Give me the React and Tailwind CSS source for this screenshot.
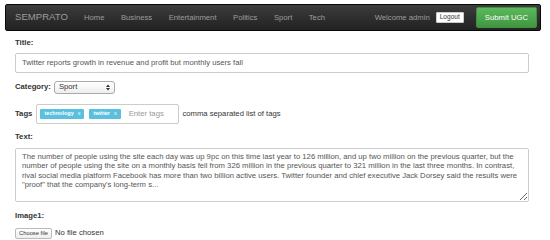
import { useState } from "react";

const links = ["Home", "Business", "Entertainment", "Politics", "Sport", "Tech"];

const body =
  "The number of people using the site each day was up 9pc on this time last year to 126 million, and up two million on the previous quarter, but the number of people using the site on a monthly basis fell from 326 million in the previous quarter to 321 million in the last three months. In contrast, rival social media platform Facebook has more than two billion active users. Twitter founder and chief executive Jack Dorsey said the results were \"proof\" that the company's long-term s...";

const Tag = ({ label }) => (
  <span className="flex items-center gap-[4px] h-[10px] px-[4px] rounded-[1px] bg-[#5bc0de] text-white text-[5.5px] font-bold leading-none">
    {label}
    <span className="font-normal">x</span>
  </span>
);

const App = () => {
  const [title, setTitle] = useState(
    "Twitter reports growth in revenue and profit but monthly users fall"
  );
  const [text, setText] = useState(body);

  return (
    <div className="w-[550px] h-[240px] overflow-hidden bg-white text-[#333] text-[7.7px] font-['Liberation_Sans',Arial,sans-serif]">
      {/* Navbar */}
      <div className="mt-[4px] ml-[5px] mr-[9px] h-[27px] flex items-center rounded-[2px] bg-gradient-to-b from-[#3c3c3c] to-[#222] border border-[#080808]">
        <span className="ml-[9px] mr-[16px] text-[9.6px] text-[#9d9d9d]">SEMPRATO</span>
        <div className="flex gap-[16.5px] text-[#9d9d9d]">
          {links.map((l) => (
            <span key={l}>{l}</span>
          ))}
        </div>
        <div className="ml-auto flex items-center">
          <span className="text-[#9d9d9d]">Welcome admin</span>
          <button className="ml-[6px] h-[11px] px-[3px] bg-white border border-[#ccc] rounded-[1px] text-[6.6px] leading-none text-[#333]">
            Logout
          </button>
          <button className="ml-[12px] mr-[3px] h-[21px] px-[8px] rounded-[2px] bg-gradient-to-b from-[#5cb85c] to-[#419641] border border-[#3e8f3e] text-white text-[7.7px] leading-none">
            Submit UGC
          </button>
        </div>
      </div>

      <div className="pl-[15px] pr-[21px]">
        <label className="block mt-[5.5px] h-[11px] leading-[11px] font-bold">Title:</label>
        <input
          className="mt-[5px] block w-full h-[20px] px-[6px] border border-[#ccc] rounded-[2px] text-[7.7px] text-[#555] outline-none"
          value={title}
          onChange={(e) => setTitle(e.target.value)}
        />

        <div className="mt-[8px] flex items-center h-[13px]">
          <span className="font-bold">Category:</span>
          <div className="ml-[3px] w-[61px] h-[13px] flex items-center justify-between px-[4px] border border-[#aaa] rounded-[3px] bg-gradient-to-b from-white to-[#eee]">
            <span>Sport</span>
            <svg width="4" height="7" viewBox="0 0 4 7">
              <path d="M0 3 L2 0.5 L4 3 Z M0 4 L2 6.5 L4 4 Z" fill="#333" />
            </svg>
          </div>
        </div>

        <div className="mt-[10px] flex items-center h-[20px]">
          <span className="font-bold">Tags</span>
          <div className="ml-[4px] w-[143px] h-[20px] flex items-center gap-[5px] px-[3px] border border-[#ccc] rounded-[2px]">
            <Tag label="technology" />
            <Tag label="twitter" />
            <span className="ml-[3px] text-[#999]">Enter tags</span>
          </div>
          <span className="ml-[3px]">comma separated list of tags</span>
        </div>

        <label className="block mt-[7.5px] h-[11px] leading-[11px] font-bold">Text:</label>
        <textarea
          className="mt-[5.5px] block w-full h-[54px] px-[6px] pt-[3px] pb-[2px] border border-[#ccc] rounded-[2px] text-[7.7px] leading-[9.5px] text-[#555] outline-none"
          value={text}
          onChange={(e) => setText(e.target.value)}
        />

        <label className="block mt-[8.5px] h-[11px] leading-[11px] font-bold">Image1:</label>
        <div className="mt-[6.5px] flex items-center h-[11px]">
          <span className="h-[11px] px-[3px] flex items-center border border-[#bbb] rounded-[2px] bg-gradient-to-b from-white to-[#eee] text-[5.8px]">
            Choose file
          </span>
          <span className="ml-[3px]">No file chosen</span>
        </div>
      </div>
    </div>
  );
};

export default App;
